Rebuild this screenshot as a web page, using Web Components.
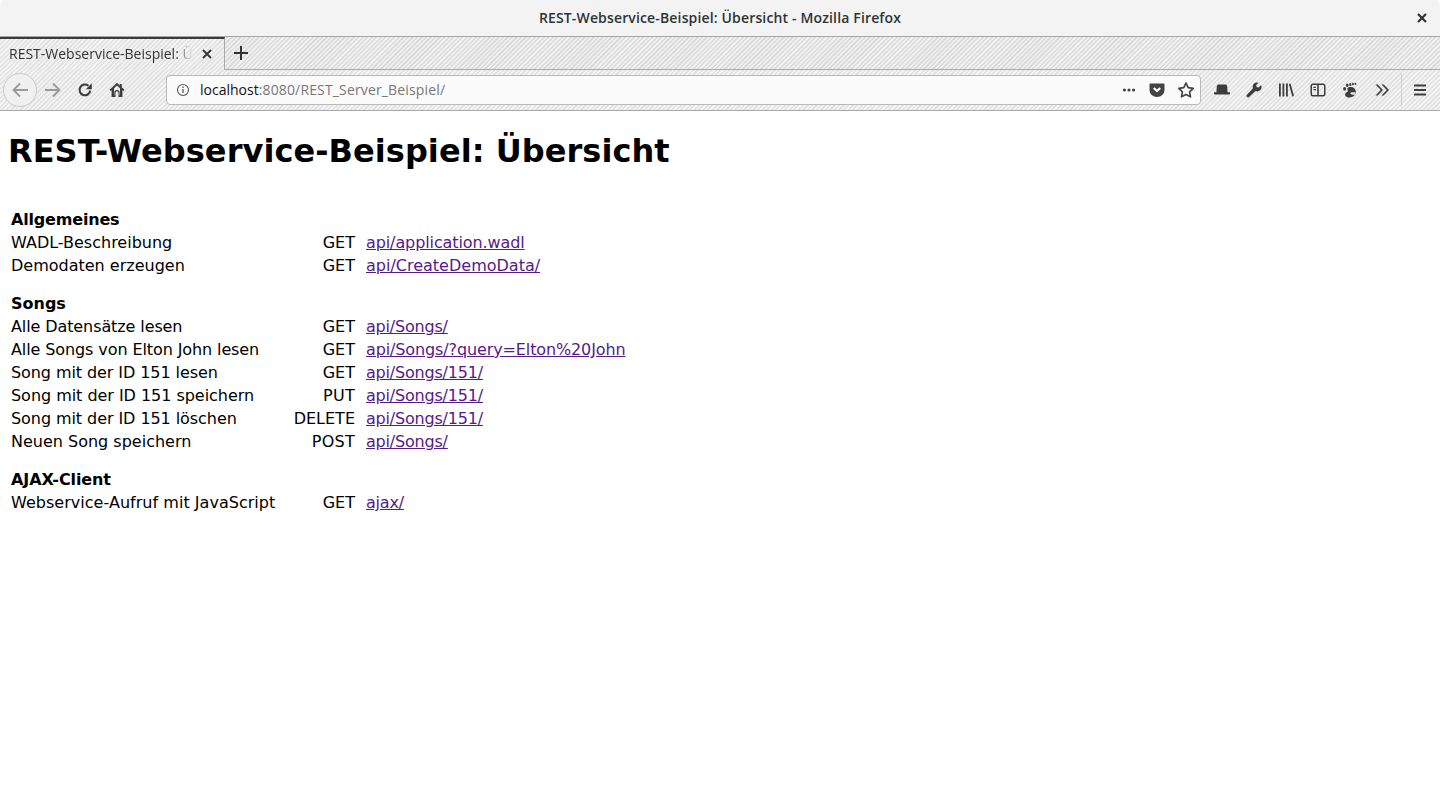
<!DOCTYPE html>
<html lang="de">
<head>
<meta charset="UTF-8">
<title>REST-Webservice-Beispiel: Übersicht</title>
<style>
    html, body { margin: 0; height: 100%; background: #fff; }
    body { display: flex; flex-direction: column; height: 798px; overflow: hidden; }
</style>
</head>
<body>
<title-bar>REST-Webservice-Beispiel: Übersicht - Mozilla Firefox</title-bar>
<tab-strip>REST-Webservice-Beispiel: Übersicht</tab-strip>
<nav-bar>
    <tool-icon slot="left"><svg viewBox="0 0 16 16"><path d="M13.300 8.700A5.400 5.400 0 1 1 11.400 3.700" fill="none" stroke="#3d3d3d" stroke-width="2.100"/><path d="M14.800 1.300v6h-6z" fill="#3d3d3d"/></svg></tool-icon>
    <tool-icon slot="left"><svg viewBox="0 0 16 16"><path fill-rule="evenodd" d="M8 .8L.5 7.800l1.200 1.300.9-.8V15h3.900v-4.300a1.500 1.500 0 0 1 3 0V15h3.900V8.300l.9.8 1.200-1.300-2.700-2.500V2h-2v1.600zM8 3.500l3 2.800V13.300h-.4v-2.700a2.600 2.600 0 0 0-5.200 0v2.700H5V6.300z"/></svg></tool-icon>

    <tool-icon><svg viewBox="0 0 16 16"><path d="M2.800 4.200Q2.900 2.500 4.500 2.500h7q1.600 0 1.700 1.700l.4 6h2.400v1.300q0 1-1 1H1q-1 0-1-1v-1.300h2.400z"/></svg></tool-icon>
    <tool-icon><svg viewBox="0 0 16 16"><path d="M15 3.200l-2.600 2.300-1.800-.5-.5-1.700L12.500.8A4.200 4.200 0 0 0 7 6.300L.9 12.800a1.300 1.300 0 0 0 0 1.900l.3.300a1.300 1.300 0 0 0 1.900 0L9.500 9a4.200 4.200 0 0 0 5.500-5.800z"/></svg></tool-icon>
    <tool-icon><svg viewBox="0 0 16 16"><path d="M1 1.500h1.800v13H1zM4.500 1.500h1.800v13H4.500zM8 1.500h1.800v13H8zM10.800 2l1.700-.5 3.500 12.500-1.700.5z"/></svg></tool-icon>
    <tool-icon><svg viewBox="0 0 16 16"><path fill-rule="evenodd" d="M3 1.500h10a2.500 2.500 0 0 1 2.500 2.500v8a2.500 2.500 0 0 1-2.500 2.500H3A2.500 2.500 0 0 1 .5 12V4A2.500 2.500 0 0 1 3 1.500zM3 3a1 1 0 0 0-1 1v8a1 1 0 0 0 1 1h4.200V3zm5.800 0v10H13a1 1 0 0 0 1-1V4a1 1 0 0 0-1-1zM3.400 4.800h2.500v1.200H3.400zm0 2.300h2.500v1.200H3.400z"/></svg></tool-icon>
    <tool-icon><svg viewBox="0 0 16 16" fill="#000"><path fill-rule="evenodd" d="M7.500 5C11 4.500 13.800 6.300 13.800 9.800S11 15.500 7.500 15.500 2.400 13.500 3.300 11.700 6.300 10.200 5.800 8.500 4.800 5.500 7.500 5zM10 10.200a1.500 1.500 0 0 0-1.500 1.400c0 .8 1 1.100 2 1.100h2.600v-2.500z"/><ellipse cx="2.600" cy="6.800" rx="1.500" ry="1.900"/><ellipse cx="5.200" cy="3.300" rx="1.300" ry="1.700"/><ellipse cx="8.300" cy="2.400" rx="1.100" ry="1.500"/><ellipse cx="11" cy="2" rx="1" ry="1.300"/><ellipse cx="13.400" cy="1.900" rx=".9" ry="1.100"/></svg></tool-icon>
    <tool-icon><svg viewBox="0 0 16 16"><path d="M1.500 2.500h2.200L9 8l-5.300 5.500H1.500L6.800 8zM7.500 2.500h2.200L15 8l-5.300 5.500H7.500L12.800 8z"/></svg></tool-icon>
    <tool-icon slot="menu"><svg viewBox="0 0 16 16"><path d="M2 2.500h12v2H2zM2 7h12v2H2zM2 11.500h12v2H2z"/></svg></tool-icon>
</nav-bar>
<rest-page>
    <api-group title="Allgemeines" ls="-.18">
        <api-row method="GET" href="api/application.wadl" link-ls="-.1">WADL-Beschreibung</api-row>
        <api-row method="GET" href="api/CreateDemoData/">Demodaten erzeugen</api-row>
    </api-group>
    <api-group title="Songs">
        <api-row method="GET" href="api/Songs/" ls="-.1" link-ls="-.2">Alle Datensätze lesen</api-row>
        <api-row method="GET" href="api/Songs/?query=Elton%20John" ls="-.1" link-ls="-.12">Alle Songs von Elton John lesen</api-row>
        <api-row method="GET" href="api/Songs/151/" ls="-.08" link-ls="-.2">Song mit der ID 151 lesen</api-row>
        <api-row method="PUT" href="api/Songs/151/" ls="-.035" link-ls="-.2" method-ls=".25">Song mit der ID 151 speichern</api-row>
        <api-row method="DELETE" href="api/Songs/151/" ls="-.07" link-ls="-.2">Song mit der ID 151 löschen</api-row>
        <api-row method="POST" href="api/Songs/" link-ls="-.2" method-ls=".25">Neuen Song speichern</api-row>
    </api-group>
    <api-group title="AJAX-Client" ls="-.1">
        <api-row method="GET" href="ajax/" ls=".03" link-ls="-.2">Webservice-Aufruf mit JavaScript</api-row>
    </api-group>
</rest-page>

<script>
    const UI_FONT = '"Open Sans", "Noto Sans", "DejaVu Sans", sans-serif';
    const TAB_STRIPES = 'repeating-linear-gradient(135deg, #dcdcdc 0, #dcdcdc 1.6px, #f0f0f0 1.6px, #f0f0f0 3.2px)';
    const NAV_STRIPES = 'repeating-linear-gradient(135deg, #e3e3e3 0, #e3e3e3 1.6px, #f3f3f3 1.6px, #f3f3f3 3.2px)';

    function define(name, html) {
        customElements.define(name, class extends HTMLElement {
            constructor() {
                super();
                this.attachShadow({mode: 'open'}).innerHTML = typeof html === 'function' ? html(this) : html;
            }
        });
    }

    define('title-bar', `
        <style>
            :host { display: flex; flex: none; position: relative; align-items: center; justify-content: center; box-sizing: border-box;
                height: 37px; padding-bottom: 2px; background: #f3f3f3; border-bottom: 1px solid #a5a5a1; border-radius: 5px 5px 0 0;
                font: 600 14px ${UI_FONT}; letter-spacing: .15px; color: #2e3436; }
            svg { position: absolute; right: 12px; top: 12px; }
        </style>
        <slot></slot>
        <svg width="12" height="12" viewBox="0 0 12 12"><path d="M2 2l8 8M10 2l-8 8" stroke="#2e3436" stroke-width="2.2" fill="none"/></svg>
    `);

    define('tab-strip', `
        <style>
            :host { display: flex; flex: none; box-sizing: border-box; height: 33px; background: ${TAB_STRIPES};
                border-bottom: 1px solid #a9a9a9; font: 14px ${UI_FONT}; color: #333; }
            .tab { box-sizing: border-box; width: 225px; height: 33px; padding: 0 0 3px 9px; display: flex; align-items: center; position: relative;
                border-top: 2px solid #3a3a3a; border-right: 1px solid #a9a9a9; background: ${NAV_STRIPES}; }
            .name { width: 186px; overflow: hidden; white-space: nowrap;
                -webkit-mask-image: linear-gradient(to right, #000 166px, transparent 184px); mask-image: linear-gradient(to right, #000 166px, transparent 184px); }
            .close { position: absolute; left: 201px; top: 9px; }
            .add { margin: 9px 0 0 9px; }
        </style>
        <div class="tab">
            <span class="name"><slot></slot></span>
            <svg class="close" width="12" height="12" viewBox="0 0 12 12"><path d="M2 2l8 8M10 2l-8 8" stroke="#333" stroke-width="1.8" fill="none"/></svg>
        </div>
        <svg class="add" width="14" height="14" viewBox="0 0 14 14"><path d="M7 0v14M0 7h14" stroke="#333" stroke-width="2" fill="none"/></svg>
    `);

    define('tool-icon', `
        <style>
            :host { display: flex; flex: none; width: 32px; height: 32px; align-items: center; justify-content: center; }
            ::slotted(svg) { width: 16px; height: 16px; fill: #3d3d3d; }
        </style>
        <slot></slot>
    `);

    define('url-bar', `
        <style>
            :host { display: flex; flex: 1; align-items: center; box-sizing: border-box; height: 30px; margin: 0 5px 0 2px;
                background: #fbfbfb; border: 1px solid #b9b9b9; border-radius: 4px; font: 14px ${UI_FONT}; letter-spacing: .15px; color: #777; }
            .info { margin-left: 9px; flex: none; }
            .host { color: #111; letter-spacing: 0; }
            .url { margin-left: 10px; flex: 1; white-space: nowrap; padding-bottom: 1px; }
            .page { display: flex; align-items: center; gap: 12px; margin-right: 5px; }
        </style>
        <svg class="info" width="14" height="14" viewBox="0 0 14 14"><circle cx="7" cy="7" r="5.5" fill="none" stroke="#555" stroke-width="1.1"/><path d="M7 6v4M7 3.600v1.300" stroke="#555" stroke-width="1.300"/></svg>
        <span class="url"><span class="host">localhost</span>:8080/REST_Server_Beispiel/</span>
        <span class="page">
            <svg width="16" height="16" viewBox="0 0 16 16"><circle cx="3.400" cy="8" r="1.600" fill="#444"/><circle cx="8" cy="8" r="1.600" fill="#444"/><circle cx="12.600" cy="8" r="1.600" fill="#444"/></svg>
            <svg width="16" height="16" viewBox="0 0 16 16"><path d="M1.500 1.500h13a1 1 0 0 1 1 1V8A7.500 7 0 0 1 .5 8V2.500a1 1 0 0 1 1-1z" fill="#444"/><path d="M4.800 6l3.200 3 3.200-3" fill="none" stroke="#fff" stroke-width="2.200"/></svg>
            <svg width="18" height="18" viewBox="0 0 18 18"><path d="M9 2l2.200 4.600 5 .7-3.600 3.500.9 5L9 13.400l-4.500 2.400.9-5L1.800 7.300l5-.7z" fill="none" stroke="#444" stroke-width="1.700" stroke-linejoin="round"/></svg>
        </span>
    `);

    define('nav-bar', `
        <style>
            :host { display: flex; flex: none; align-items: center; box-sizing: border-box; height: 41px; padding: 0 4px 0 3px;
                background: ${NAV_STRIPES}; border-bottom: 1px solid #a9a9a9; }
            .back { display: flex; align-items: center; justify-content: center; box-sizing: border-box; width: 34px; height: 34px; border-radius: 50%;
                border: 1px solid #c9c9c9; background: #f0f0f0; }
            .forward { display: flex; width: 32px; justify-content: center; }
            .sep { width: 1px; height: 32px; background: #cfcfcf; margin: 0 2px 0 3px; }
            .gap { width: 31px; flex: none; }
        </style>
        <span class="back"><svg width="18" height="16" viewBox="0 0 18 16"><path d="M9 1.500L2.500 8 9 14.500M3 8h14" fill="none" stroke="#999" stroke-width="1.800"/></svg></span>
        <span class="forward"><svg width="18" height="16" viewBox="0 0 18 16"><path d="M9 1.500L15.500 8 9 14.500M15 8H1" fill="none" stroke="#999" stroke-width="1.800"/></svg></span>
        <slot name="left"></slot>
        <span class="gap"></span>
        <url-bar></url-bar>
        <slot></slot>
        <span class="sep"></span>
        <slot name="menu"></slot>
    `);

    define('rest-page', `
        <style>
            :host { display: block; flex: 1; padding: 0 8px; font: 16px "DejaVu Sans", sans-serif; color: #000; }
            h1 { margin: 22px 0 38px; font-size: 32px; line-height: 37px; font-weight: bold; letter-spacing: .06px; }
            .groups { display: flex; flex-direction: column; gap: 15px; padding-left: 3px; }
        </style>
        <h1>REST-Webservice-Beispiel: Übersicht</h1>
        <div class="groups"><slot></slot></div>
    `);

    define('api-group', el => `
        <style>
            :host { display: block; }
            .title { height: 23px; line-height: 23px; font-weight: bold; letter-spacing: ${el.getAttribute('ls') || 0}px; }
        </style>
        <div class="title">${el.getAttribute('title')}</div>
        <slot></slot>
    `);

    // ls / link-ls / method-ls: kleine Korrektur der Laufweite pro Spalte
    define('api-row', el => `
        <style>
            :host { display: grid; grid-template-columns: 344px auto; column-gap: 11px; height: 23px; line-height: 23px; white-space: nowrap; }
            .wrap { display: flex; justify-content: space-between; }
            .label { letter-spacing: ${el.getAttribute('ls') || 0}px; }
            .method { letter-spacing: ${el.getAttribute('method-ls') || 0}px; }
            a { color: #551a8b; letter-spacing: ${el.getAttribute('link-ls') || 0}px; }
        </style>
        <div class="wrap"><span class="label"><slot></slot></span><span class="method">${el.getAttribute('method')}</span></div>
        <div><a href="${el.getAttribute('href')}">${el.getAttribute('href')}</a></div>
    `);
</script>
</body>
</html>
